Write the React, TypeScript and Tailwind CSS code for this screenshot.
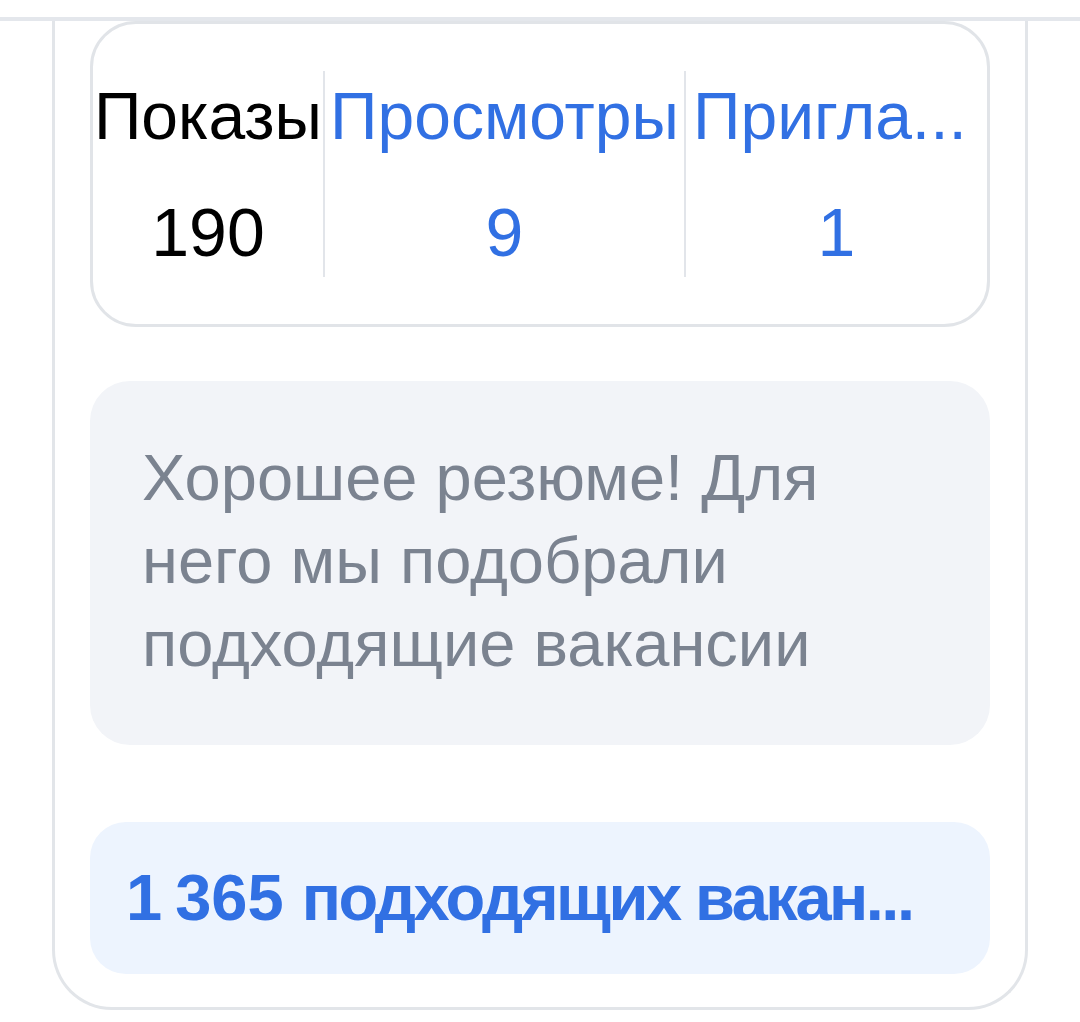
import React from "react";

export default function App() {
  const font = { fontFamily: '"Liberation Sans", Arial, sans-serif' };
  return (
    <div className="w-[1080px] h-[1022px] bg-white overflow-hidden" style={font}>
      <div className="h-[17px]" />
      <div className="h-[4px] bg-[#e4e7ec]" />
      <div className="mx-[52px] h-[989px] border-x-[3px] border-b-[3px] border-[#e2e5e9] rounded-b-[60px] px-[35px] flex flex-col">
        <div className="h-[306px] border-[3px] border-[#e1e4e8] rounded-[46px] flex items-start pt-[47px]">
          <div className="w-[230px] h-[206px] flex flex-col items-center pt-[8px]">
            <div className="text-[66px] leading-[74px] text-black whitespace-nowrap">Показы</div>
            <div className="text-[68px] leading-[70px] text-black mt-[44px]">190</div>
          </div>
          <div className="w-[2px] h-[206px] bg-[#e2e5ea]" />
          <div className="w-[359px] h-[206px] flex flex-col items-center pt-[8px]">
            <div className="text-[66px] leading-[74px] text-[#3170e3] whitespace-nowrap">Просмотры</div>
            <div className="text-[68px] leading-[70px] text-[#3170e3] mt-[44px]">9</div>
          </div>
          <div className="w-[2px] h-[206px] bg-[#e2e5ea]" />
          <div className="flex-1 min-w-0 h-[206px] flex flex-col items-center pt-[8px]">
            <div className="w-full pl-[7px] text-[66px] leading-[74px] text-[#3170e3] whitespace-nowrap" title="Приглашения">Пригла...</div>
            <div className="text-[68px] leading-[70px] text-[#3170e3] mt-[44px]">1</div>
          </div>
        </div>
        <div className="mt-[54px] h-[364px] rounded-[40px] bg-[#f2f4f8] pl-[52px] pr-[100px] pt-[55px]">
          <p className="text-[65px] leading-[83px] text-[#7b8390]">
            Хорошее резюме! Для него мы подобрали подходящие вакансии
          </p>
        </div>
        <div className="mt-[77px] h-[152px] rounded-[36px] bg-[#edf4fe] px-[36px] flex items-center">
          <div className="text-[65px] font-bold tracking-[-2.5px] text-[#3170e3] whitespace-nowrap" title="1 365 подходящих вакансий">
            1&#8239;365 подходящих вакан...
          </div>
        </div>
      </div>
    </div>
  );
}
